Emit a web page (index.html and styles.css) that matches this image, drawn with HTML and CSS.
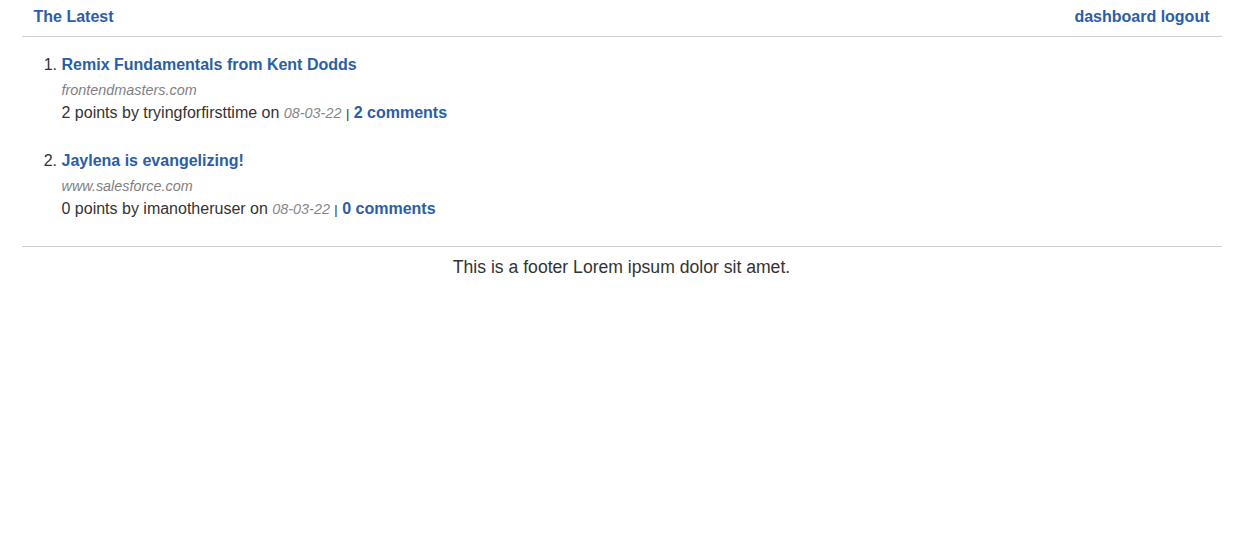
FILE: index.html
```html
<!DOCTYPE html>
<html>
<head>
<meta charset="utf-8">
<link rel="stylesheet" href="styles.css">
</head>
<body>
<div class="container">
  <header class="header">
    <a class="brand" href="#">The Latest</a>
    <nav class="nav"><a href="#">dashboard</a> <a href="#">logout</a></nav>
  </header>
  <ol class="posts">
    <li class="post">
      <a class="title" href="#">Remix Fundamentals from Kent Dodds</a>
      <div class="domain">frontendmasters.com</div>
      <div class="meta">2 points by tryingforfirsttime on <span class="date">08-03-22</span> <span class="sep">|</span> <a href="#">2 comments</a></div>
    </li>
    <li class="post">
      <a class="title" href="#">Jaylena is evangelizing!</a>
      <div class="domain">www.salesforce.com</div>
      <div class="meta">0 points by imanotheruser on <span class="date">08-03-22</span> <span class="sep">|</span> <a href="#">0 comments</a></div>
    </li>
  </ol>
  <footer class="footer">This is a footer Lorem ipsum dolor sit amet.</footer>
</div>
</body>
</html>
```
FILE: styles.css
```css
body {
  margin: 0;
  font-family: "Liberation Sans", Arial, sans-serif;
  color: #333;
  background: #fff;
}
a {
  color: #2a5ea8;
  font-weight: bold;
  text-decoration: none;
}
.container {
  width: 1200px;
  margin: 0 auto;
  padding-left: 2px;
}
.header {
  display: flex;
  justify-content: space-between;
  padding: 7px 12px 9px;
  line-height: 20px;
  font-size: 16px;
  border-bottom: 1px solid #cfcfcf;
}
.posts {
  margin: 18px 0 0;
  padding: 0 0 0 40px;
  font-size: 16px;
}
.post {
  line-height: 20px;
  margin-bottom: 28px;
}
.post:last-child {
  margin-bottom: 27px;
}
.title {
  font-size: 16px;
  line-height: 20px;
}
.domain {
  margin-top: 6px;
  font-size: 14.4px;
  line-height: 18px;
  font-style: italic;
  color: #7f7f7f;
}
.meta {
  margin-top: 4px;
  height: 20px;
  font-size: 16px;
  line-height: 20px;
}
.date {
  font-size: 14.4px;
  line-height: 1;
  font-style: italic;
  color: #888;
}
.sep {
  font-size: 13px;
  line-height: 1;
}
.footer {
  border-top: 1px solid #cfcfcf;
  padding-top: 10px;
  text-align: center;
  font-size: 17.6px;
  line-height: 20px;
}
```
